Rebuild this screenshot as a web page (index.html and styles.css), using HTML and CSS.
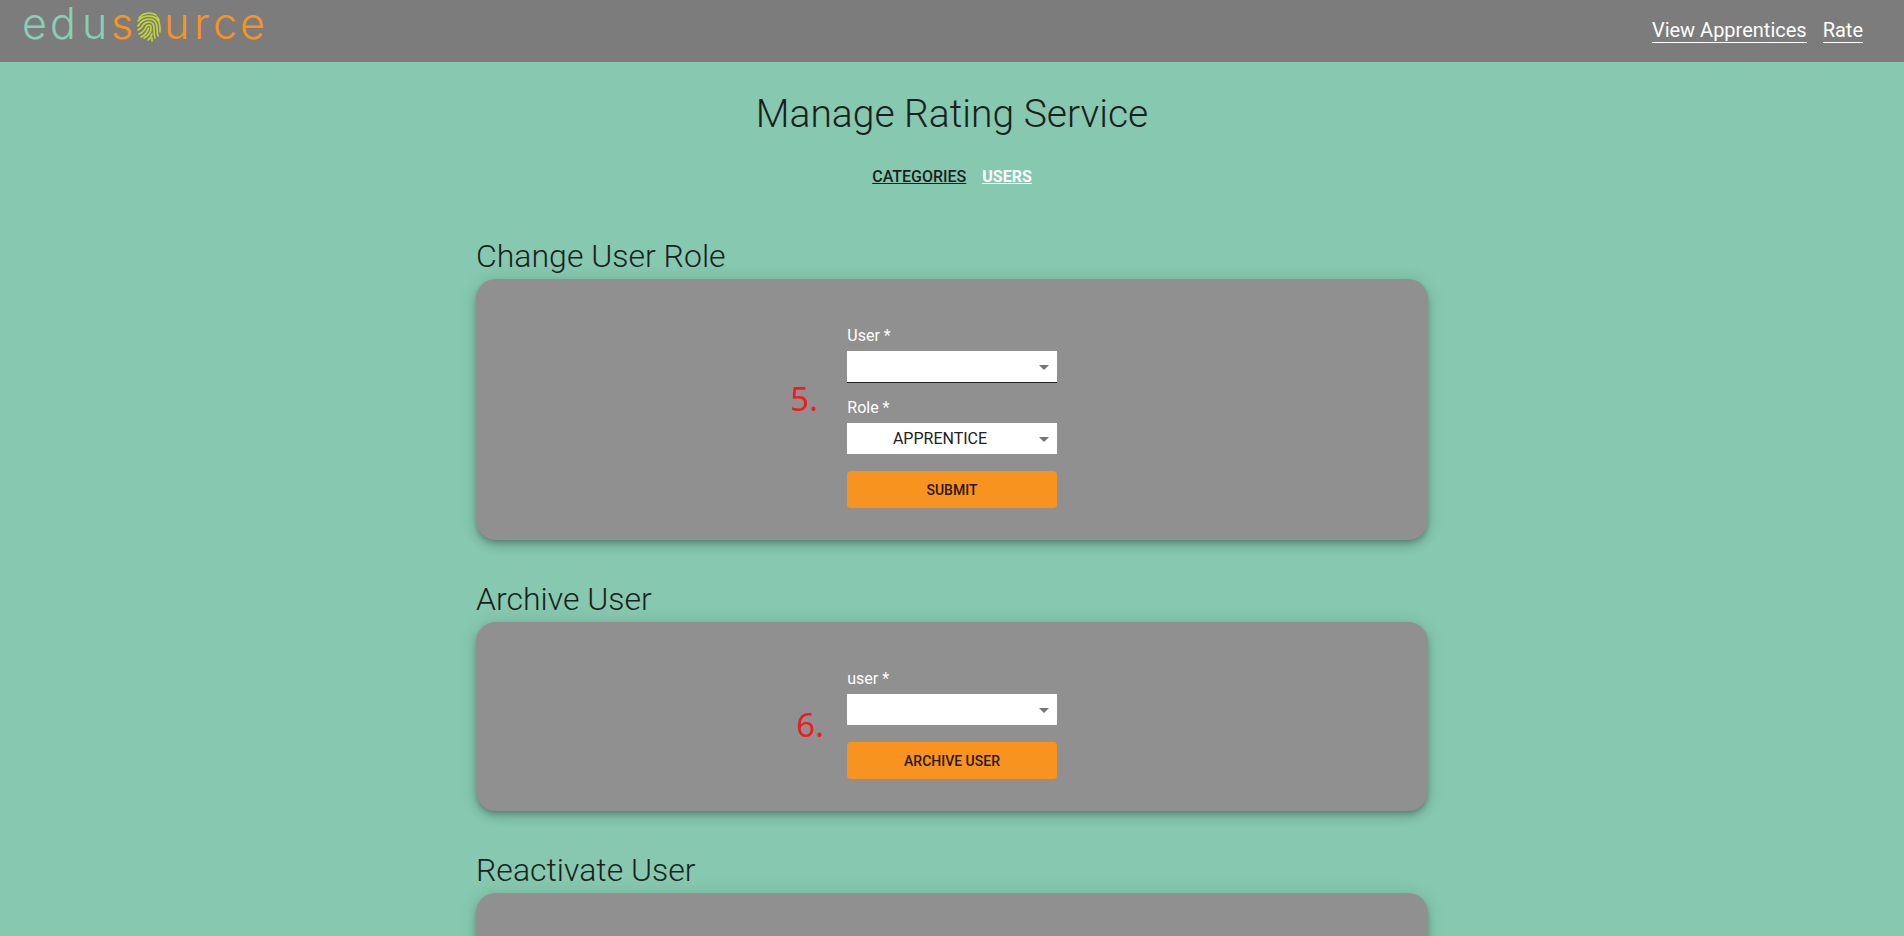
FILE: index.html
```html
<!DOCTYPE html>
<html lang="en">
<head>
<meta charset="utf-8">
<meta name="viewport" content="width=device-width, initial-scale=1">
<title>Manage Rating Service</title>
<link rel="stylesheet" href="styles.css">
</head>
<body>
<header class="topbar">
  <a class="logo" href="#" aria-label="edusource">
    <svg class="logo-art" width="242" height="50" viewBox="0 0 242 50">
      <g class="logo-text">
        <text class="logo-edu" x="-2 26 58" y="39">edu</text>
        <text class="logo-source" x="87" y="39">s</text>
        <text class="logo-source" x="140 170 189 216" y="39">urce</text>
      </g>
      <g class="fingerprint" transform="translate(113 12)">
        <path d="M5 3Q12-1 19 3M1 9Q5 4 12 4Q22 4 23 15V20M1 14Q5 7 12 7Q20 7 20 16Q20 21 21 24M1 18Q5 16 6 13Q8 10 12 10Q17 10 17 16Q17 23 18 26M2 22Q7 20 9 15Q10 13 12 13Q14 13 14 16Q14 21 10 24L7 26M4 25Q10 22 11.5 16M15 22Q14 26 11 28M15 26V29M2 6L4 4M20 5L22 8"/>
      </g>
    </svg>
  </a>
  <nav class="topnav">
    <a href="#">View Apprentices</a>
    <a href="#">Rate</a>
  </nav>
</header>
<main class="page">
  <h1 class="title">Manage Rating Service</h1>
  <nav class="tabs">
    <a class="tab" href="#">CATEGORIES</a>
    <a class="tab tab-current" href="#" aria-current="page">USERS</a>
  </nav>

  <section class="section">
    <h2 class="heading">Change User Role</h2>
    <div class="card">
      <form class="form">
        <div class="field">
          <label for="role-user">User *</label>
          <div class="picker">
            <select class="select select-active" id="role-user"><option></option></select>
            <svg class="arrow" width="10" height="5" viewBox="0 0 10 5"><path d="M0 0h10L5 5z"/></svg>
          </div>
        </div>
        <div class="field">
          <label for="role">Role *</label>
          <div class="picker">
            <select class="select" id="role"><option>APPRENTICE</option></select>
            <svg class="arrow" width="10" height="5" viewBox="0 0 10 5"><path d="M0 0h10L5 5z"/></svg>
          </div>
        </div>
        <button class="button" type="button">SUBMIT</button>
        <span class="note note-five">5.</span>
      </form>
    </div>
  </section>

  <section class="section">
    <h2 class="heading">Archive User</h2>
    <div class="card">
      <form class="form">
        <div class="field">
          <label for="archive-user">user *</label>
          <div class="picker">
            <select class="select" id="archive-user"><option></option></select>
            <svg class="arrow" width="10" height="5" viewBox="0 0 10 5"><path d="M0 0h10L5 5z"/></svg>
          </div>
        </div>
        <button class="button" type="button">ARCHIVE USER</button>
        <span class="note note-six">6.</span>
      </form>
    </div>
  </section>

  <section class="section">
    <h2 class="heading">Reactivate User</h2>
    <div class="card">
      <form class="form">
        <div class="field">
          <label for="reactivate-user">user *</label>
          <div class="picker">
            <select class="select" id="reactivate-user"><option></option></select>
            <svg class="arrow" width="10" height="5" viewBox="0 0 10 5"><path d="M0 0h10L5 5z"/></svg>
          </div>
        </div>
        <button class="button" type="button">REACTIVATE USER</button>
      </form>
    </div>
  </section>
</main>
</body>
</html>
```

FILE: styles.css
```css
* { box-sizing: border-box; }

body {
  margin: 0;
  background: #86c9b0;
  color: #1b1f1e;
  font-family: Roboto, "Liberation Sans", sans-serif;
  font-size: 16px;
  line-height: 24px;
}

.topbar {
  display: flex;
  justify-content: space-between;
  align-items: center;
  height: 62px;
  padding: 0 41px 2px 24px;
  background: #7c7c7c;
}

.logo { align-self: flex-start; }
.logo-art { display: block; overflow: visible; }
.logo-text { font-family: Inter, sans-serif; font-size: 43px; font-weight: 300; }
.logo-edu { fill: #87d0b8; }
.logo-source { fill: #f9931f; }
.fingerprint { fill: none; stroke: #c5d92d; stroke-width: 1.6; stroke-linecap: round; }

.topnav { display: flex; gap: 16px; }
.topnav a {
  color: #fff;
  font-size: 20px;
  line-height: 24px;
  text-decoration: none;
  border-bottom: 1px solid #fff;
}

.page {
  width: 50%;
  margin: 0 auto;
  padding: 28px 0 48px;
}

.title {
  margin: 0;
  font-size: 39px;
  font-weight: 300;
  line-height: 48px;
  text-align: center;
}

.tabs {
  display: flex;
  justify-content: center;
  gap: 16px;
  margin: 27px 0 48px;
}
.tab { color: #1b1f1e; font-weight: 500; }
.tab-current { color: #fff; font-weight: 700; }

.section { margin-bottom: 40px; }
.heading {
  margin: 0 0 4px;
  font-size: 32px;
  font-weight: 300;
  line-height: 38px;
}
.card {
  padding: 45px 0 32px;
  border-radius: 20px;
  background: #909090;
  box-shadow: 0 3px 5px -1px rgba(0, 0, 0, .2), 0 6px 10px rgba(0, 0, 0, .14), 0 1px 18px rgba(0, 0, 0, .12);
}

.form {
  position: relative;
  display: flex;
  flex-direction: column;
  gap: 16px;
  width: 22%;
  min-width: 180px;
  margin: 0 auto;
}
.field {
  display: flex;
  flex-direction: column;
  gap: 3px;
  color: #fff;
}
.field + .field { margin-top: -3px; }
.picker { position: relative; }
.select {
  display: block;
  width: 100%;
  height: 32px;
  padding: 0 24px 0 0;
  border: 0;
  border-bottom: 1px solid transparent;
  border-radius: 0;
  background: #fff;
  background-clip: padding-box;
  color: #212121;
  font: inherit;
  text-align-last: center;
  appearance: none;
}
.select-active { border-bottom-color: #212121; }
.arrow {
  position: absolute;
  top: 14px;
  right: 8px;
  fill: #757575;
  pointer-events: none;
}
.button {
  height: 37px;
  border: 0;
  border-radius: 4px;
  background: #f9931f;
  color: #271905;
  font: 500 14px/24px Roboto, "Liberation Sans", sans-serif;
}

.note {
  position: absolute;
  color: #ed1c24;
  font-family: "Noto Sans", "Open Sans", sans-serif;
  font-size: 33px;
  line-height: 40px;
}
.note-five { top: 55px; left: -57px; }
.note-six { top: 38px; left: -51px; }
```
